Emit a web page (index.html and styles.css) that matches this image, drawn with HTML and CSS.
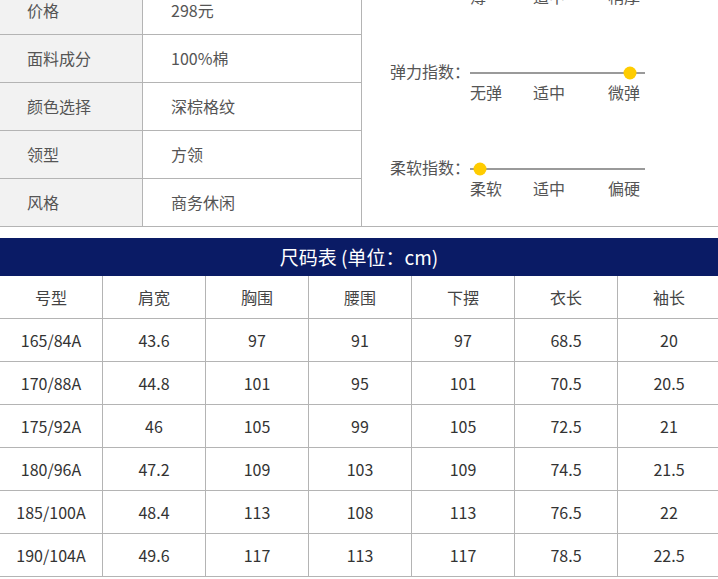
FILE: index.html
```html
<!DOCTYPE html>
<html lang="zh-CN">
<head>
<meta charset="utf-8">
<title>商品信息</title>
<link rel="stylesheet" href="styles.css">
</head>
<body>
<div class="page">
  <section class="spec">
    <table class="attrs">
      <tr><th>价格</th><td>298元</td></tr>
      <tr><th>面料成分</th><td>100%棉</td></tr>
      <tr><th>颜色选择</th><td>深棕格纹</td></tr>
      <tr><th>领型</th><td>方领</td></tr>
      <tr><th>风格</th><td>商务休闲</td></tr>
    </table>
    <div class="meters">
      <div class="meter">
        <span class="meter-name">厚度指数：</span>
        <div class="track"><span class="knob" style="left: 50%"></span></div>
        <div class="ticks"><span>薄</span><span>适中</span><span>稍厚</span></div>
      </div>
      <div class="meter">
        <span class="meter-name">弹力指数：</span>
        <div class="track"><span class="knob" style="left: 91.4%"></span></div>
        <div class="ticks"><span>无弹</span><span>适中</span><span>微弹</span></div>
      </div>
      <div class="meter">
        <span class="meter-name">柔软指数：</span>
        <div class="track"><span class="knob" style="left: 5.7%"></span></div>
        <div class="ticks"><span>柔软</span><span>适中</span><span>偏硬</span></div>
      </div>
    </div>
  </section>

  <h2 class="size-title">尺码表 (单位：cm)</h2>
  <table class="sizes">
    <tr><th>号型</th><th>肩宽</th><th>胸围</th><th>腰围</th><th>下摆</th><th>衣长</th><th>袖长</th></tr>
    <tr><td>165/84A</td><td>43.6</td><td>97</td><td>91</td><td>97</td><td>68.5</td><td>20</td></tr>
    <tr><td>170/88A</td><td>44.8</td><td>101</td><td>95</td><td>101</td><td>70.5</td><td>20.5</td></tr>
    <tr><td>175/92A</td><td>46</td><td>105</td><td>99</td><td>105</td><td>72.5</td><td>21</td></tr>
    <tr><td>180/96A</td><td>47.2</td><td>109</td><td>103</td><td>109</td><td>74.5</td><td>21.5</td></tr>
    <tr><td>185/100A</td><td>48.4</td><td>113</td><td>108</td><td>113</td><td>76.5</td><td>22</td></tr>
    <tr><td>190/104A</td><td>49.6</td><td>117</td><td>113</td><td>117</td><td>78.5</td><td>22.5</td></tr>
  </table>
</div>
</body>
</html>
```

FILE: styles.css
```css
html, body {
  margin: 0;
  padding: 0;
  background: #fff;
  overflow: hidden;
}

body {
  font-family: "Noto Sans CJK SC", "Liberation Sans", sans-serif;
  color: #555;
}

.page {
  width: 718px;
  margin-top: -13px;
}

/* ---------- spec section ---------- */
.spec {
  display: flex;
  border-bottom: 1px solid #b4b4b4;
}

.attrs {
  width: 362px;
  border-collapse: separate;
  border-spacing: 0;
  border-right: 1px solid #b4b4b4;
  flex: none;
}

.attrs th,
.attrs td {
  height: 45px;
  padding: 0 0 2px;
  font-size: 16px;
  line-height: 22px;
  font-weight: normal;
  text-align: left;
  vertical-align: middle;
  color: #555;
  border-bottom: 1px solid #b4b4b4;
}

.attrs tr:last-child th,
.attrs tr:last-child td {
  border-bottom: none;
  height: 45px;
}

.attrs th {
  width: 115px;
  padding-left: 27px;
  background: #f2f2f2;
  border-right: 1px solid #b4b4b4;
}

.attrs td {
  padding-left: 28px;
}

.meters {
  flex: 1;
  height: 239px;
  display: flex;
  flex-direction: column;
  justify-content: center;
  padding-left: 28px;
}

.meter {
  flex: none;
  height: 96px;
  box-sizing: border-box;
  padding-top: 4px;
  display: grid;
  grid-template-columns: 80px 175px;
  grid-template-rows: 20px 20px;
  align-items: center;
}

.meter-name {
  font-size: 16px;
  line-height: 20px;
  margin-top: -3px;
  color: #555;
  white-space: nowrap;
}

.track {
  position: relative;
  height: 2px;
  background: #9a9a9a;
}

.knob {
  position: absolute;
  top: 50%;
  width: 13px;
  height: 13px;
  border-radius: 50%;
  background: #ffcc00;
  transform: translate(-50%, -50%);
}

.ticks {
  grid-column: 2;
  display: grid;
  grid-template-columns: 63px 75px auto;
  font-size: 16px;
  line-height: 20px;
  margin-top: -2px;
  color: #555;
}

/* ---------- size table ---------- */
.size-title {
  margin: 11px 0 0;
  height: 38px;
  line-height: 37px;
  background: #0a1b65;
  color: #fff;
  font-size: 19px;
  font-weight: normal;
  text-align: center;
}

.sizes {
  width: 721px;
  table-layout: fixed;
  border-collapse: separate;
  border-spacing: 0;
}

.sizes th,
.sizes td {
  width: 102px;
  height: 41px;
  padding: 0 0 1px;
  border-right: 1px solid #b4b4b4;
  border-bottom: 1px solid #b4b4b4;
  text-align: center;
  vertical-align: middle;
  font-size: 16px;
  font-weight: normal;
  color: #333;
}

.sizes th {
  color: #444;
}
```
